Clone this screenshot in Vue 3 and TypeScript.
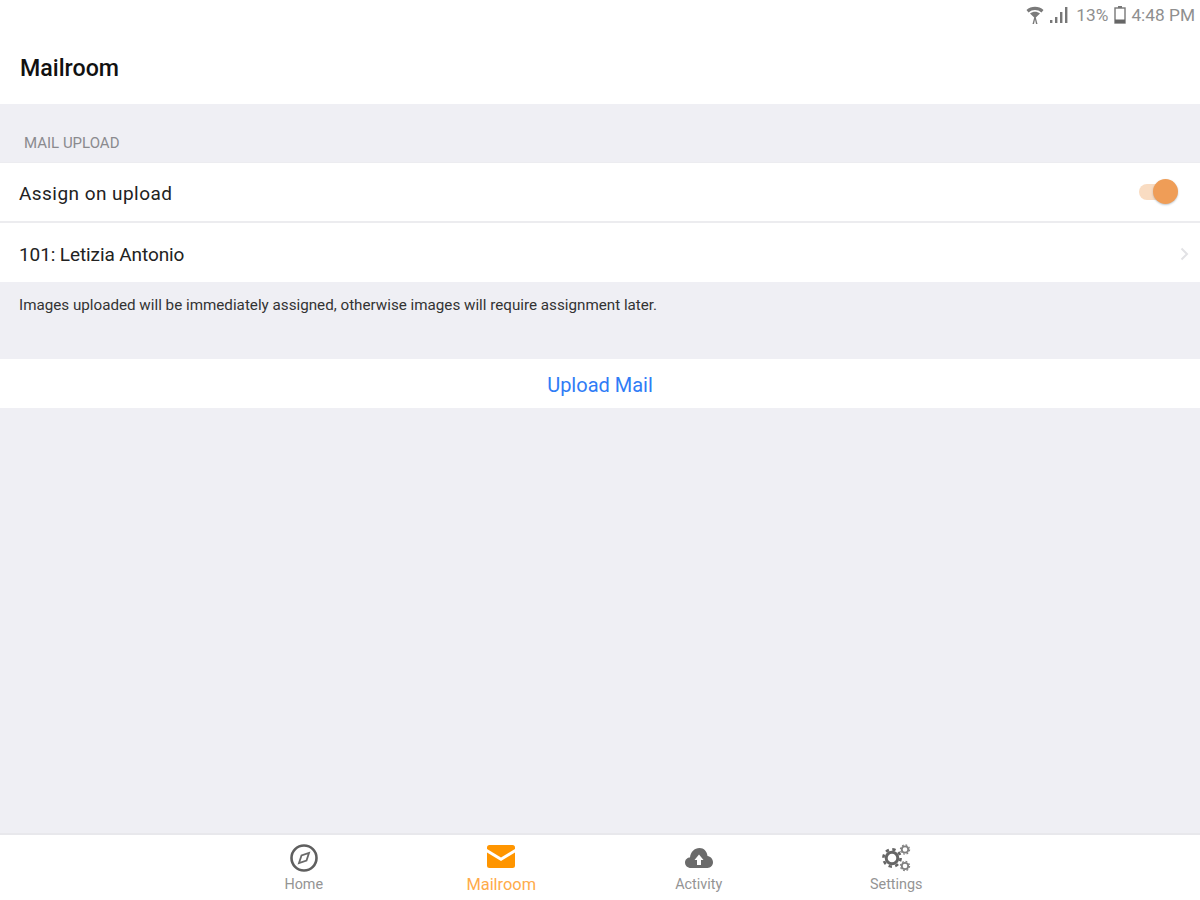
<script setup lang="ts">
</script>

<template>
  <div class="page">
    <div class="status">
      <svg class="wifi" width="18" height="20" viewBox="0 0 18 20">
        <path d="M0.500 5C5 0.800 13 0.800 17.500 5L15.500 7.500C11.500 4.200 6.500 4.200 2.500 7.500Z" fill="#7a7a7a"/>
        <path d="M4 8.500C7 6.300 11 6.300 14 8.500L9.800 12.500L11.500 19H10L9 14.500L8 19H6.500L8.200 12.500Z" fill="#7a7a7a"/>
      </svg>
      <svg class="signal" width="18" height="18" viewBox="0 0 18 18">
        <rect x="0" y="14" width="2.400" height="3" fill="#777"/>
        <rect x="5" y="11" width="2.400" height="6" fill="#777"/>
        <rect x="10" y="6" width="2.400" height="11" fill="#777"/>
        <rect x="15" y="1" width="2.400" height="16" fill="#777"/>
      </svg>
      <span class="pct">13%</span>
      <svg class="batt" width="12" height="18" viewBox="0 0 12 18">
        <rect x="4" y="0" width="4" height="2" fill="#777"/>
        <rect x="1" y="2" width="10" height="15" fill="none" stroke="#777" stroke-width="1.400"/>
        <rect x="1" y="13.500" width="10" height="3.500" fill="#666"/>
      </svg>
      <span class="time">4:48 PM</span>
    </div>
    <header class="nav">Mailroom</header>

    <main class="content">
      <div class="section-label">MAIL UPLOAD</div>
      <div class="group">
        <div class="row first">
          <span>Assign on upload</span>
          <span class="toggle"><span class="track"></span><span class="thumb"></span></span>
        </div>
        <div class="row second">
          <span>101: Letizia Antonio</span>
          <svg width="9" height="14" viewBox="0 0 9 14"><path d="M1.500 1.500L7 7L1.500 12.500" fill="none" stroke="#e2e2e5" stroke-width="2"/></svg>
        </div>
      </div>
      <p class="note">Images uploaded will be immediately assigned, otherwise images will require assignment later.</p>
      <div class="upload">Upload Mail</div>
    </main>

    <nav class="tabs">
      <div class="tab">
        <svg width="30" height="30" viewBox="0 0 30 30">
          <circle cx="15" cy="15" r="12.500" fill="none" stroke="#5f5f5f" stroke-width="2.600"/>
          <path d="M20 10L17.500 17.500L10 20L12.500 12.500Z" fill="none" stroke="#6a6a6a" stroke-width="1.800"/>
        </svg>
        <span>Home</span>
      </div>
      <div class="tab active">
        <svg width="30" height="30" viewBox="0 0 30 30">
          <path d="M1 4.500Q1 2 3.500 2H26.500Q29 2 29 4.500V6L15 14.500L1 6Z" fill="#ff9500"/>
          <path d="M1 9.500L15 18L29 9.500V22.500Q29 25 26.500 25H3.500Q1 25 1 22.500Z" fill="#ff9500"/>
        </svg>
        <span>Mailroom</span>
      </div>
      <div class="tab">
        <svg width="30" height="30" viewBox="0 0 30 30">
          <path fill-rule="evenodd" fill="#6b6b6b" d="M7 25C3.500 25 1 22.500 1 19.500C1 16.500 3.500 14.500 6 14.500C6.500 9 10.500 5 15.500 5C20 5 23 8.500 23.500 13C26.500 13.500 29 16 29 19.300C29 22.500 26.500 25 23.500 25ZM15 11.500L10.500 17H13V22H17V17H19.500Z"/>
        </svg>
        <span>Activity</span>
      </div>
      <div class="tab">
        <svg width="30" height="30" viewBox="0 0 30 30">
          <circle cx="11" cy="15" r="5.800" fill="none" stroke="#666" stroke-width="3"/>
          <circle cx="11" cy="15" r="8.600" fill="none" stroke="#666" stroke-width="2.600" stroke-dasharray="3.400 3.355"/>
          <circle cx="24" cy="6.500" r="3.200" fill="none" stroke="#808080" stroke-width="1.800"/>
          <circle cx="24" cy="23" r="3.200" fill="none" stroke="#808080" stroke-width="1.800"/>
          <circle cx="24" cy="6.500" r="4.600" fill="none" stroke="#808080" stroke-width="1.200" stroke-dasharray="1.800 1.813"/>
          <circle cx="24" cy="23" r="4.600" fill="none" stroke="#808080" stroke-width="1.200" stroke-dasharray="1.800 1.813"/>
        </svg>
        <span>Settings</span>
      </div>
    </nav>
  </div>
</template>

<style>
body { margin: 0; }
</style>

<style scoped>
.page {
  width: 1200px;
  height: 900px;
  display: flex;
  flex-direction: column;
  background: #efeff4;
  font-family: "Roboto", "Liberation Sans", sans-serif;
  overflow: hidden;
}
.status {
  height: 30px;
  background: #fff;
  display: flex;
  align-items: center;
  justify-content: flex-end;
  padding-right: 5px;
  color: #8f8f8f;
  font-size: 17.300px;
}
.wifi { margin-right: 6px; }
.signal { margin-right: 8px; }
.pct { margin-right: 6px; }
.batt { margin-right: 5px; }
.nav {
  height: 74px;
  background: #fff;
  box-sizing: border-box;
  padding: 24px 0 0 20px;
  font-size: 23.200px;
  line-height: 28px;
  font-weight: 500;
  color: #111;
}
.content { flex: 1; }
.section-label {
  height: 58px;
  box-sizing: border-box;
  padding: 31px 0 0 24px;
  font-size: 15px;
  line-height: 16px;
  color: #8a8a8e;
}
.group { background: #fff; }
.row {
  display: flex;
  align-items: center;
  justify-content: space-between;
  box-sizing: border-box;
  padding: 0 11px 0 19px;
  font-size: 19px;
  color: #222;
}
.first {
  height: 61px;
  padding-top: 2px;
  padding-right: 22px;
  letter-spacing: 0.450px;
  border-top: 1px solid #ececf0;
  border-bottom: 2px solid #ececef;
}
.second {
  height: 59px;
  padding-top: 3px;
  letter-spacing: -0.100px;
}
.toggle {
  position: relative;
  width: 39px;
  height: 26px;
  display: block;
  top: -1px;
}
.track {
  position: absolute;
  left: 0;
  top: 5px;
  width: 34px;
  height: 16px;
  border-radius: 8px;
  background: #f9dcc2;
}
.thumb {
  position: absolute;
  right: 0;
  top: 0;
  width: 25px;
  height: 25px;
  border-radius: 50%;
  background: #ef9d57;
  box-shadow: 0 1px 2px rgba(90, 110, 130, 0.4);
}
.note {
  margin: 0;
  height: 77px;
  box-sizing: border-box;
  padding: 14px 0 0 19px;
  font-size: 15.200px;
  line-height: 18px;
  color: #333;
}
.upload {
  height: 49px;
  padding-top: 2px;
  box-sizing: border-box;
  background: #fff;
  display: flex;
  align-items: center;
  justify-content: center;
  font-size: 20px;
  color: #2f7cf6;
}
.tabs {
  height: 67px;
  background: #fff;
  border-top: 2px solid #e8e8ec;
  box-sizing: border-box;
  display: flex;
  justify-content: center;
}
.tab {
  width: 197.500px;
  display: flex;
  flex-direction: column;
  align-items: center;
  padding-top: 8px;
  font-size: 14.400px;
  color: #949494;
}
.tab span { line-height: 16px; }
.tab svg { margin-bottom: 4px; }
.active { color: #ffab4a; }
.active span { font-size: 16.400px; }
</style>
